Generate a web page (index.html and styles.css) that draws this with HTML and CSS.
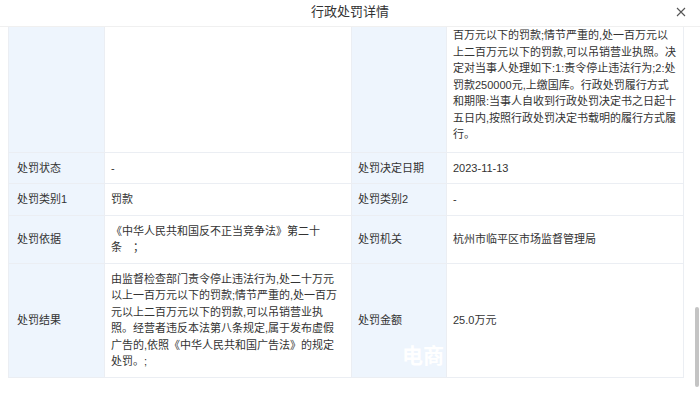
FILE: index.html
```html
<!DOCTYPE html>
<html lang="zh-CN">
<head>
<meta charset="utf-8">
<title>行政处罚详情</title>
<link rel="stylesheet" href="styles.css">
</head>
<body>
<div class="modal">
  <header class="modal-header">
    <h2 class="modal-title">行政处罚详情</h2>
    <button class="close" aria-label="关闭">
      <svg width="10" height="10" viewBox="0 0 10 10"><path d="M1 1L9 9M9 1L1 9" stroke="#555" stroke-width="1.1" fill="none"/></svg>
    </button>
  </header>
  <div class="modal-body">
    <table class="detail">
      <colgroup>
        <col class="c-label1"><col class="c-value1"><col class="c-label2"><col class="c-value2">
      </colgroup>
      <tr class="row-first">
        <th></th><td></td><th></th>
        <td>百万元以下的罚款;情节严重的,处一百万元以<br>上二百万元以下的罚款,可以吊销营业执照。决<br>定对当事人处理如下:1:责令停止违法行为;2:处<br>罚款250000元,上缴国库。行政处罚履行方式<br>和期限:当事人自收到行政处罚决定书之日起十<br>五日内,按照行政处罚决定书载明的履行方式履<br>行。</td>
      </tr>
      <tr>
        <th>处罚状态</th><td>-</td><th>处罚决定日期</th><td>2023-11-13</td>
      </tr>
      <tr>
        <th>处罚类别1</th><td>罚款</td><th>处罚类别2</th><td>-</td>
      </tr>
      <tr>
        <th>处罚依据</th><td>《中华人民共和国反不正当竞争法》第二十<br>条&emsp;；</td><th>处罚机关</th><td>杭州市临平区市场监督管理局</td>
      </tr>
      <tr>
        <th>处罚结果</th>
        <td>由监督检查部门责令停止违法行为,处二十万元<br>以上一百万元以下的罚款;情节严重的,处一百万<br>元以上二百万元以下的罚款,可以吊销营业执<br>照。经营者违反本法第八条规定,属于发布虚假<br>广告的,依照《中华人民共和国广告法》的规定<br>处罚。;</td>
        <th>处罚金额</th><td>25.0万元</td>
      </tr>
    </table>
    <div class="watermark">电商</div>
    <div class="scroll-thumb"></div>
  </div>
</div>
</body>
</html>
```

FILE: styles.css
```css
* { box-sizing: border-box; }
html, body {
  margin: 0;
  padding: 0;
  background: #ffffff;
}
body {
  font-family: "Liberation Sans", "Noto Sans CJK SC", sans-serif;
  color: #333333;
  width: 700px;
  height: 393px;
  overflow: hidden;
}
.modal {
  width: 700px;
  height: 393px;
  display: flex;
  flex-direction: column;
  background: #fff;
}
.modal-header {
  height: 27px;
  flex: none;
  border-bottom: 1px solid #f0f0f0;
  display: flex;
  align-items: center;
  justify-content: center;
  position: relative;
}
.modal-title {
  margin: 0;
  font-size: 13px;
  font-weight: normal;
  color: #333;
  line-height: 17px;
  padding-bottom: 3px;
}
.close {
  position: absolute;
  right: 14px;
  top: 7px;
  width: 10px;
  height: 10px;
  padding: 0;
  border: 0;
  background: transparent;
  display: flex;
}
.modal-body {
  flex: 1;
  position: relative;
  overflow: hidden;
}
.detail {
  margin-left: 8px;
  width: 675px;
  table-layout: fixed;
  border-collapse: collapse;
  font-size: 11px;
  line-height: 16.5px;
  border: 1px solid #ebeef3;
  border-top: 0;
}
.c-label1 { width: 96px; }
.c-value1 { width: 247px; }
.c-label2 { width: 95px; }
.c-value2 { width: 237px; }
.detail th,
.detail td {
  border-bottom: 1px solid #ebeef3;
  border-right: 1px solid #ebeef3;
  padding: 7px 6px;
  text-align: left;
  vertical-align: middle;
  font-weight: normal;
  white-space: nowrap;
}
.detail th {
  background: #eef5fd;
  color: #333;
}
.detail th:first-child { padding-left: 8px; }
.detail td { background: #fff; }
.row-first th,
.row-first td {
  padding-top: 0;
  padding-bottom: 9px;
}
.watermark {
  position: absolute;
  left: 402px;
  top: 315px;
  font-size: 21px;
  font-weight: bold;
  color: #ffffff;
  font-family: "Noto Sans CJK SC", sans-serif;
  line-height: 24px;
  pointer-events: none;
}
.scroll-thumb {
  position: absolute;
  right: 1px;
  top: 280px;
  width: 4px;
  height: 80px;
  background: #c4c4c4;
  border-radius: 2px;
}
```
